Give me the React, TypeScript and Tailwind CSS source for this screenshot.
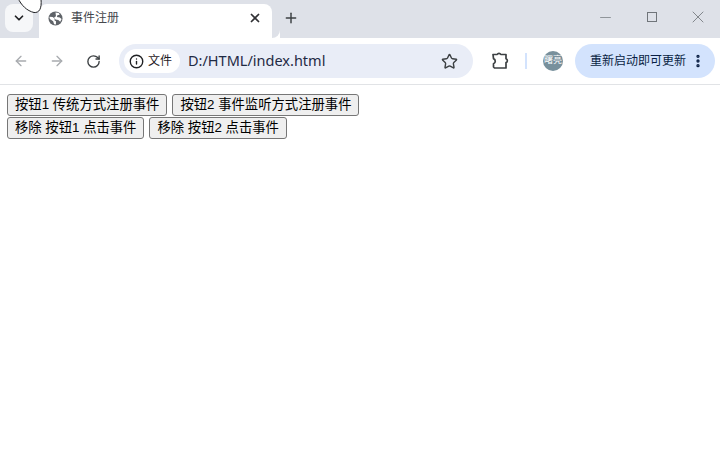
import { ArrowLeft, ArrowRight, RotateCw, Star, Plus, X, ChevronDown, Minus, Info, EllipsisVertical } from 'lucide-react';

const cjk = "font-['Liberation_Sans','Noto_Sans_CJK_SC',sans-serif]";

function PageButton({ label }: { label: string }) {
  return (
    <button className="h-[22px] rounded-[3px] border border-[#767676] bg-[#efefef] px-[7px] text-[13.33px] leading-[20px] text-black whitespace-nowrap">
      {label}
    </button>
  );
}

function Globe() {
  return (
    <svg width="15" height="15" viewBox="0 0 16 16" className="shrink-0">
      <circle cx="8" cy="8" r="7.5" fill="#5f6368" />
      <path d="M1.500 6l3.500.5 2 1.500 0 2 1.500 1 0 3.500-2-.5-1-3-3.500-2.500zM8 1.500l3.500.5 1 2-2.500.5-.5 2 3 .5 2 1.500-1.500 3-2-2-3-.5-1.500-2 2-1.500z" fill="#ffffff" />
    </svg>
  );
}

function Extension() {
  return (
    <svg width="20" height="20" viewBox="0 0 20 20" fill="none" stroke="#3c4043" strokeWidth="1.700" strokeLinejoin="round">
      <path d="M3 3.500h4.200a2 2 0 0 1 3.600 0H16v4.300a2 2 0 0 1 0 3.800V17H4.500l-1-1v-3.200a2.800 2.800 0 0 0 0-5.200z" />
    </svg>
  );
}

export default function App() {
  return (
    <div className={`h-[475px] w-[720px] overflow-hidden bg-white ${cjk}`}>
      <div className="relative flex h-[38px] bg-[#dee1e8]">
        <div className="ml-[5px] mt-1 flex h-[28px] w-[28px] items-center justify-center rounded-lg bg-[#f6f7f9]">
          <ChevronDown size={14} strokeWidth={3} color="#202124" />
        </div>
        <div className="relative ml-[6px] mt-1 flex h-[34px] w-[233px] items-center rounded-t-lg bg-white pb-[6px] pl-[9px] pr-[10px]">
          <Globe />
          <span className="ml-[8px] flex-1 text-xs text-[#45484d]">事件注册</span>
          <X size={14} strokeWidth={3} color="#303134" />
          <div className="absolute bottom-0 -right-2 h-2 w-2 bg-white">
            <div className="h-2 w-2 rounded-br-lg bg-[#dee1e8]" />
          </div>
        </div>
        <div className="ml-[11px] mt-[10px] flex h-4 w-4 items-center justify-center">
          <Plus size={16} strokeWidth={2.200} color="#3c4043" />
        </div>
        <div className="ml-auto mr-[12px] mt-[7px] flex h-5 items-center gap-[26.500px]">
          <div className="flex h-5 w-5 items-center justify-center">
            <Minus size={17} strokeWidth={1} color="#70757a" />
          </div>
          <div className="flex h-5 w-5 items-center justify-center">
            <div className="h-[10px] w-[10px] border border-[#70757a]" />
          </div>
          <div className="flex h-5 w-5 items-center justify-center">
            <X size={20} strokeWidth={1} color="#70757a" />
          </div>
        </div>
        {/* mouse cursor caught in the capture */}
        <svg width="28" height="14" viewBox="0 0 28 14" fill="none" className="absolute left-[16px] top-0">
          <path d="M2 -2C5 5 11 11 18 12.500C23 13 26 9 25 -1" fill="#ffffff" stroke="#202124" strokeWidth="1" />
        </svg>
      </div>

      <div className="relative flex h-[47px] items-center rounded-t-lg border-b border-[#e1e3e6] bg-white">
        <div className="ml-[13px] flex items-center gap-[20px]">
          <ArrowLeft size={16} strokeWidth={2} color="#a8abaf" />
          <ArrowRight size={16} strokeWidth={2} color="#a8abaf" />
          <RotateCw size={15} strokeWidth={2.200} color="#3c4043" className="ml-[1px]" />
        </div>
        <div className="ml-[18px] flex h-[34px] w-[354px] items-center rounded-full bg-[#e9edf7] pl-[5px] pr-[15px]">
          <div className="flex h-[24px] w-[56px] items-center rounded-full bg-white pl-[5px]">
            <Info size={15} strokeWidth={2.200} color="#202124" />
            <span className="ml-[4px] text-xs text-[#1f2125]">文件</span>
          </div>
          <span className="ml-[8px] flex-1 font-['Noto_Sans',sans-serif] text-[14.500px] text-[#1f2a44]">D:/HTML/index.html</span>
          <Star size={17} strokeWidth={2} color="#3c4043" />
        </div>
        <div className="ml-[17px] flex h-5 w-5 items-center justify-center">
          <Extension />
        </div>
        <div className="ml-[15px] h-4 w-0.5 bg-[#d3e3fd]" />
        <div className="ml-[16px] flex h-5 w-5 items-center justify-center rounded-full bg-[#78909c] text-[9px] text-white">
          曙亮
        </div>
        <div className="ml-[12px] flex h-[34px] w-[140px] items-center rounded-full bg-[#d3e3fd] pl-[15px]">
          <span className="text-xs text-[#0a1f44]">重新启动即可更新</span>
          <EllipsisVertical size={16} strokeWidth={3} color="#0a1f44" className="ml-[4px]" />
        </div>
      </div>

      <div className="flex flex-col gap-px pl-[7px] pt-[9px]">
        <div className="flex gap-[5px]">
          <PageButton label="按钮1 传统方式注册事件" />
          <PageButton label="按钮2 事件监听方式注册事件" />
        </div>
        <div className="flex gap-[5px]">
          <PageButton label="移除 按钮1 点击事件" />
          <PageButton label="移除 按钮2 点击事件" />
        </div>
      </div>
    </div>
  );
}
